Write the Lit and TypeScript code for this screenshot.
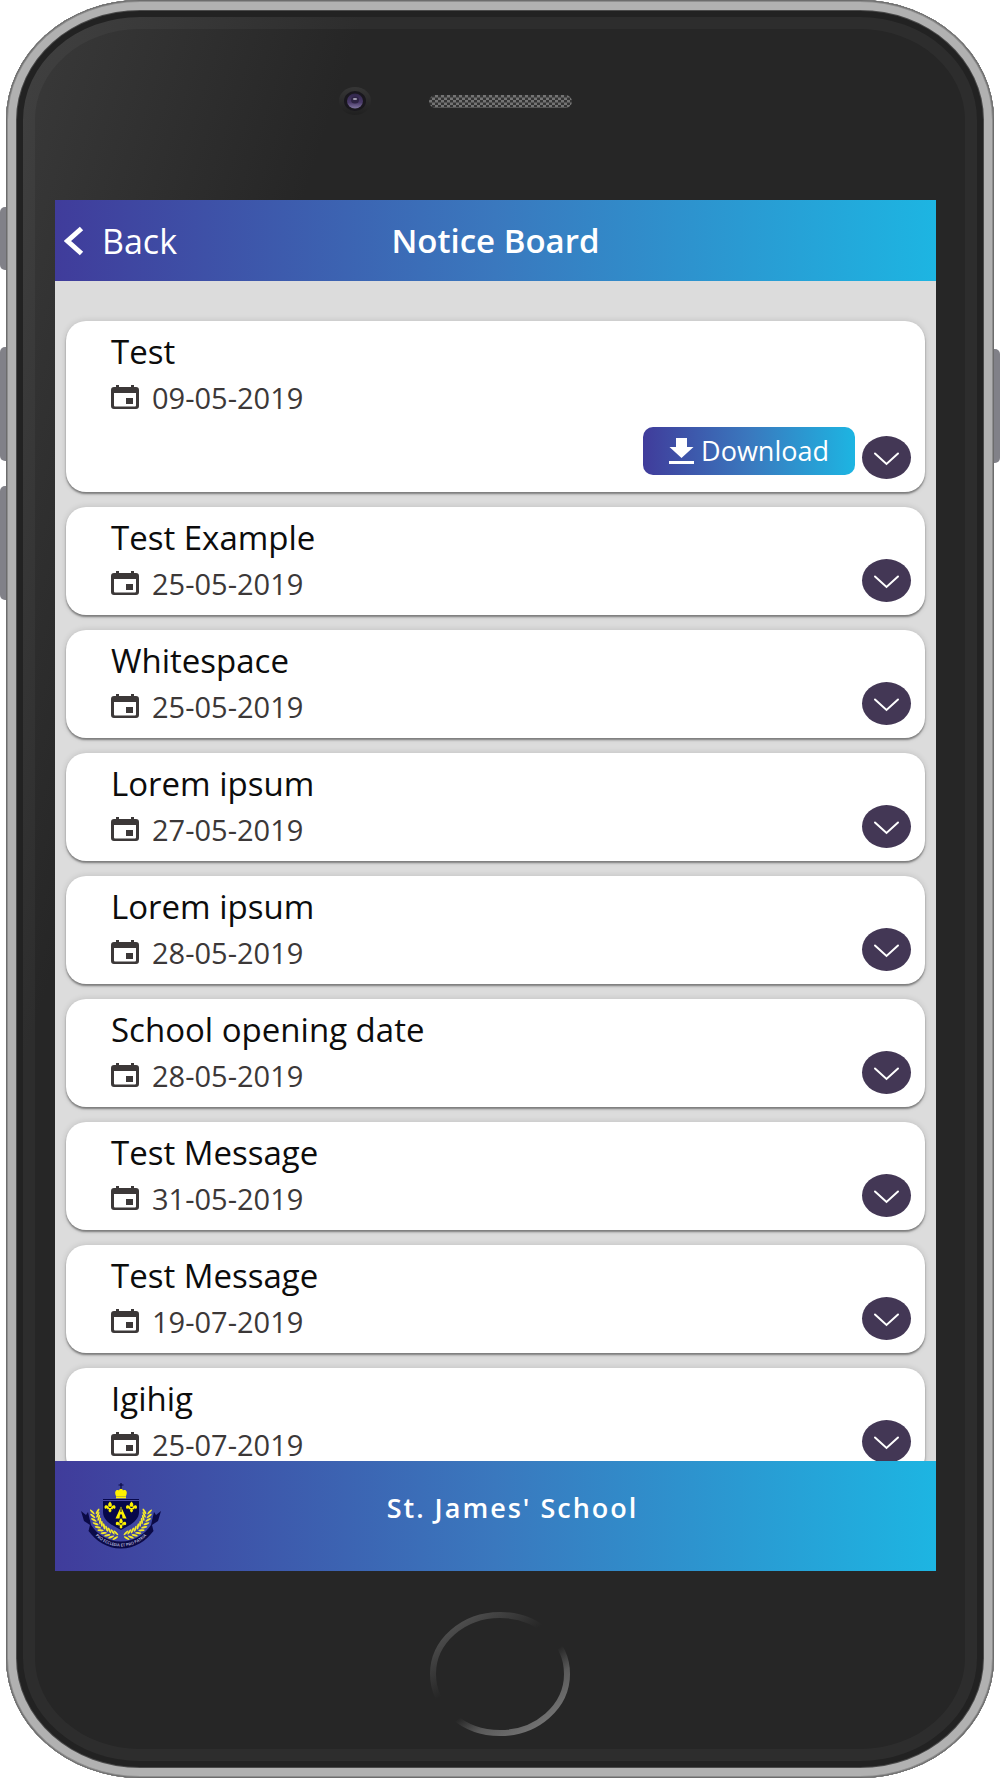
import { LitElement, html, css, svg, nothing } from "lit";
import { customElement, property } from "lit/decorators.js";

interface Notice {
  title: string;
  date: string;
  file?: boolean;
}

const NOTICES: Notice[] = [
  { title: "Test", date: "09-05-2019", file: true },
  { title: "Test Example", date: "25-05-2019" },
  { title: "Whitespace", date: "25-05-2019" },
  { title: "Lorem ipsum", date: "27-05-2019" },
  { title: "Lorem ipsum", date: "28-05-2019" },
  { title: "School opening date", date: "28-05-2019" },
  { title: "Test Message", date: "31-05-2019" },
  { title: "Test Message", date: "19-07-2019" },
  { title: "Igihig", date: "25-07-2019" },
];

const gradient = css`linear-gradient(90deg, #403c9b, #3a78be 50%, #1db5e2)`;

@customElement("notice-card")
class NoticeCard extends LitElement {
  @property({ attribute: false }) notice!: Notice;

  static styles = css`
    :host {
      display: block;
      flex: none;
    }
    .card {
      display: grid;
      grid-template-columns: 1fr auto;
      background: #fff;
      border-radius: 20px;
      box-shadow: 0 2px 2px rgba(0, 0, 0, 0.4), 0 0 6px rgba(0, 0, 0, 0.14);
    }
    .body {
      padding: 8px 0 8px 45px;
    }
    .with-file .body {
      padding-bottom: 71px;
    }
    .title {
      margin: 0;
      font-size: 33px;
      line-height: 46px;
      font-weight: 400;
      color: #0c0c0c;
    }
    .date {
      display: flex;
      align-items: center;
      gap: 13px;
      font-size: 29px;
      line-height: 46px;
      color: #3c3838;
    }
    .date svg {
      width: 28px;
      height: 26px;
      margin-bottom: 2px;
    }
    .actions {
      display: flex;
      align-items: flex-end;
      align-self: end;
      gap: 7px;
      padding: 0 14px 13px 0;
    }
    button {
      border: 0;
      padding: 0;
      font: inherit;
      color: #fff;
      cursor: pointer;
    }
    .download {
      display: flex;
      align-items: center;
      gap: 7px;
      height: 48px;
      margin-bottom: 4px;
      padding: 0 26px;
      border-radius: 10px;
      background: ${gradient};
      font-size: 27px;
      line-height: 48px;
    }
    .download svg {
      width: 25px;
      height: 26px;
    }
    .more {
      width: 49px;
      height: 43px;
      border-radius: 50%;
      background: #433755;
    }
    .more svg {
      display: block;
      width: 100%;
      height: 100%;
    }
  `;

  render() {
    const n = this.notice;
    return html`
      <article class="card ${n.file ? "with-file" : ""}">
        <div class="body">
          <h2 class="title">${n.title}</h2>
          <div class="date">
            <svg viewBox="0 0 28 26" aria-hidden="true">
              <path
                fill="#3c3838"
                fill-rule="evenodd"
                d="M5 1h3v2h12V1h3v2h2q3 0 3 3v16q0 3-3 3H3q-3 0-3-3V6q0-3 3-3h2zM3 9v12.500q0 1 1 1h20q1 0 1-1V9z"
              />
              <rect x="15" y="14" width="7" height="6" fill="#3c3838" />
            </svg>
            <time>${n.date}</time>
          </div>
        </div>
        <div class="actions">
          ${n.file
            ? html`<button class="download" type="button">
                <svg viewBox="0 0 25 26" aria-hidden="true">
                  <path fill="#fff" d="M7 0h11v9h6.500L12.500 20 .5 9H7zM0 23h25v3H0z" />
                </svg>
                <span>Download</span>
              </button>`
            : nothing}
          <button class="more" type="button" aria-label="Show notice">
            <svg viewBox="0 0 49 43" aria-hidden="true">
              <path d="M13 17.500 24.500 28 36 17.500" fill="none" stroke="#fff" stroke-width="2" stroke-linecap="round" />
            </svg>
          </button>
        </div>
      </article>
    `;
  }
}

const lily = (x: number, y: number, s: number) => svg`
  <g transform="translate(${x} ${y}) scale(${s})" fill="#fff200">
    <path d="M0-5.500C2.500-3 2-1 1-.3H-1C-2-1-2.500-3 0-5.500z" />
    <path d="M-1 .8C-1.500-2-5.500-3-5.500.2c0 1.800 2 2 2.400.8C-2.500 1.800-1.500 1.600-1 .8zM1 .8C1.500-2 5.500-3 5.500.2c0 1.800-2 2-2.400.8C2.500 1.800 1.500 1.600 1 .8z" />
    <path d="M-2.800 1h5.600v1.200H-2.800zM-.9 2.200H.9L1.600 4 0 5.500-1.600 4z" />
  </g>`;

/* Leaves follow the curve of a laurel branch, two per step. */
const laurel = () =>
  Array.from({ length: 10 }, (_, i) => {
    const a = (98 + i * 8.500) * (Math.PI / 180);
    const x = 40 + 26 * Math.cos(a);
    const y = 28 + 25 * Math.sin(a);
    const deg = (a * 180) / Math.PI + 90;
    return svg`
      <ellipse cx="3" cy="-1" rx="3.200" ry="1" transform="translate(${x} ${y}) rotate(${deg - 38})" />
      <ellipse cx="3" cy="1" rx="3.200" ry="1" transform="translate(${x} ${y}) rotate(${deg + 38})" />`;
  });

@customElement("school-crest")
class SchoolCrest extends LitElement {
  static styles = css`
    :host {
      display: block;
    }
    .crest {
      display: block;
      width: 100%;
    }
    .motto {
      font: 600 4px "Open Sans", sans-serif;
      fill: #c9c9e4;
    }
  `;

  render() {
    return html`
      <svg class="crest" viewBox="0 0 80 66" role="img" aria-label="School crest">
        <path
          d="M0 28 5 32 7 29 10 42C16 51 27 58.500 40 58.500S64 51 70 42L73 29 75 32 80 28 77 38 71 42 72.500 48C65 58 54 65.500 40 65.500S15 58 7.500 48L9 42 3 38z"
          fill="#0b0a47"
        />
        <g fill="#f4ea2a">
          ${laurel()}
          <g transform="translate(80 0) scale(-1 1)">${laurel()}</g>
        </g>
        <path d="M22 16h36v13C58 38 49 42 40 47 31 42 22 38 22 29z" fill="#07084a" />
        <path d="M22 17.500h36" stroke="#4a48a8" stroke-width="1" />
        ${lily(29, 24, 1)} ${lily(50.500, 24, 1)} ${lily(40, 40.500, 0.95)}
        <path d="M40 23.500 45.500 35.500h-4l-.5-4h-2l-.5 4h-4z" fill="#fff200" />
        <path d="M40 25v4" stroke="#07084a" stroke-width="1" />
        <path d="M35 13C33 9 35 6 38 7.500 38.500 5 41.500 5 42 7.500 45 6 47 9 45 13z" fill="#fff200" />
        <path d="M35 14.300h10" stroke="#fff200" stroke-width="2" />
        <path d="M40 0v6M37.500 2h5" stroke="#0b0a47" stroke-width="1.200" />
        <path id="ribbon" d="M7 44.500C16 56.500 27 63.500 40 63.500S64 56.500 73 44.500" fill="none" />
        <text class="motto">
          <textPath href="#ribbon" startOffset="50%" text-anchor="middle">PRO ECCLESIA ET PRO PATRIA</textPath>
        </text>
      </svg>
    `;
  }
}

@customElement("app-root")
class AppRoot extends LitElement {
  static styles = css`
    :host {
      display: grid;
      grid-template-columns: 6px minmax(0, 1fr) 6px;
      height: 100vh;
      background: #fff;
      font-family: "Open Sans", "Noto Sans", sans-serif;
    }
    .rail {
      display: flex;
      flex-direction: column;
    }
    .rail.left {
      padding-top: 207px;
    }
    .rail.right {
      padding-top: 349px;
    }
    .key {
      height: 114px;
      margin-bottom: 25px;
      background: #818188;
    }
    .key.mute {
      height: 63px;
      margin-bottom: 77px;
    }
    .left .key {
      border-radius: 5px 0 0 5px;
    }
    .right .key {
      border-radius: 0 5px 5px 0;
    }
    .phone {
      display: flex;
      flex-direction: column;
      min-height: 0;
      padding: 0 58px 0 49px;
      border-radius: 134px / 120px;
      background: linear-gradient(108deg, #3b3b3b, #262626 345px);
      box-shadow: inset 0 0 0 1px #6c6c6c, inset 0 0 0 2px #8e8e8e, inset 0 0 0 10px #b1b1b1,
        inset 0 0 0 11px #4a4a4a, inset 0 0 0 17px #222, inset 0 0 0 29px rgba(255, 255, 255, 0.035);
    }
    .top {
      flex: none;
      display: grid;
      grid-template-columns: 1fr auto 1fr;
      align-items: center;
      box-sizing: border-box;
      height: 200px;
      margin-right: -9px;
      padding-top: 2px;
    }
    .camera {
      justify-self: end;
      width: 32px;
      height: 28px;
      margin-right: 58px;
    }
    .speaker {
      width: 143px;
      height: 13px;
    }
    .bottom {
      flex: none;
      display: flex;
      align-items: center;
      justify-content: center;
      box-sizing: border-box;
      height: 207px;
      margin-right: -9px;
      padding-bottom: 2px;
    }
    .home {
      padding: 0;
      border: 0;
      border-radius: 50%;
      background: none;
    }
    .home svg {
      display: block;
      width: 140px;
      height: 124px;
    }
    .screen {
      flex: 1;
      display: flex;
      flex-direction: column;
      min-height: 0;
      background: #dcdcdc;
    }
    .bar {
      flex: none;
      display: grid;
      grid-template-columns: 1fr auto 1fr;
      align-items: center;
      height: 81px;
      background: ${gradient};
      color: #fff;
    }
    .back {
      display: flex;
      align-items: center;
      gap: 18px;
      padding-left: 9px;
      color: #fff;
      font-size: 34px;
      line-height: 46px;
      text-decoration: none;
    }
    .back svg {
      width: 20px;
      height: 30px;
    }
    .heading {
      margin: 0;
      font-size: 33px;
      line-height: 46px;
      font-weight: 600;
    }
    .list {
      flex: 1;
      display: flex;
      flex-direction: column;
      gap: 15px;
      min-height: 0;
      padding: 40px 11px 15px;
      overflow-y: auto;
      scrollbar-width: none;
    }
    .footer {
      flex: none;
      display: grid;
      grid-template-columns: 80px 1fr 45px;
      align-items: center;
      height: 110px;
      padding: 0 27px 0 26px;
      background: ${gradient};
      color: #fff;
    }
    .school {
      margin: 0;
      padding-bottom: 16px;
      text-align: center;
      font-size: 27px;
      line-height: 36px;
      font-weight: 600;
      letter-spacing: 2px;
    }
  `;

  render() {
    return html`
      <div class="rail left">
        <div class="key mute"></div>
        <div class="key"></div>
        <div class="key"></div>
      </div>
      <div class="phone">
        <div class="top">
          <svg class="camera" viewBox="0 0 32 28" aria-hidden="true">
            <defs>
              <linearGradient id="rim" x2="0" y2="1">
                <stop offset="0" stop-color="#363636" />
                <stop offset="1" stop-color="#202020" />
              </linearGradient>
              <linearGradient id="lens" x2="0" y2="1">
                <stop offset="0" stop-color="#2f2549" />
                <stop offset=".6" stop-color="#4a3a69" />
                <stop offset="1" stop-color="#8076a0" />
              </linearGradient>
            </defs>
            <ellipse cx="16" cy="14" rx="16" ry="14" fill="url(#rim)" />
            <ellipse cx="16" cy="14" rx="11" ry="10" fill="#19171d" />
            <ellipse cx="16" cy="14" rx="8" ry="7.500" fill="url(#lens)" />
            <ellipse cx="16" cy="13" rx="4" ry="3.500" fill="#2c2342" />
            <ellipse cx="16" cy="12" rx="2.200" ry="1" fill="#aaa5b8" />
          </svg>
          <svg class="speaker" viewBox="0 0 143 13" aria-hidden="true">
            <defs>
              <pattern id="mesh" width="6" height="5" patternUnits="userSpaceOnUse">
                <rect width="6" height="5" fill="#343434" />
                <rect width="3" height="2.500" fill="#747474" />
                <rect x="3" y="2.500" width="3" height="2.500" fill="#747474" />
              </pattern>
            </defs>
            <rect width="143" height="13" rx="6.500" fill="url(#mesh)" />
          </svg>
        </div>
        <main class="screen">
          <header class="bar">
            <a class="back" href="#">
              <svg viewBox="0 0 20 30" aria-hidden="true">
                <path d="M17.500 2.500 3.500 15l14 12.500" fill="none" stroke="#fff" stroke-width="5" />
              </svg>
              <span>Back</span>
            </a>
            <h1 class="heading">Notice Board</h1>
          </header>
          <section class="list">
            ${NOTICES.map((n) => html`<notice-card .notice=${n}></notice-card>`)}
          </section>
          <footer class="footer">
            <school-crest></school-crest>
            <p class="school">St. James' School</p>
          </footer>
        </main>
        <div class="bottom">
          <button class="home" type="button" aria-label="Home">
            <svg viewBox="0 0 140 124" aria-hidden="true">
              <defs>
                <linearGradient id="ring" x1="0.100" y1="0" x2="0.900" y2="1">
                  <stop offset=".1" stop-color="#4c4c4c" />
                  <stop offset=".4" stop-color="#262626" />
                  <stop offset=".58" stop-color="#262626" />
                  <stop offset=".72" stop-color="#5a5a5a" />
                  <stop offset=".95" stop-color="#777" />
                </linearGradient>
              </defs>
              <ellipse cx="70" cy="62" rx="67" ry="59" fill="none" stroke="url(#ring)" stroke-width="6" />
            </svg>
          </button>
        </div>
      </div>
      <div class="rail right"><div class="key"></div></div>
    `;
  }
}
